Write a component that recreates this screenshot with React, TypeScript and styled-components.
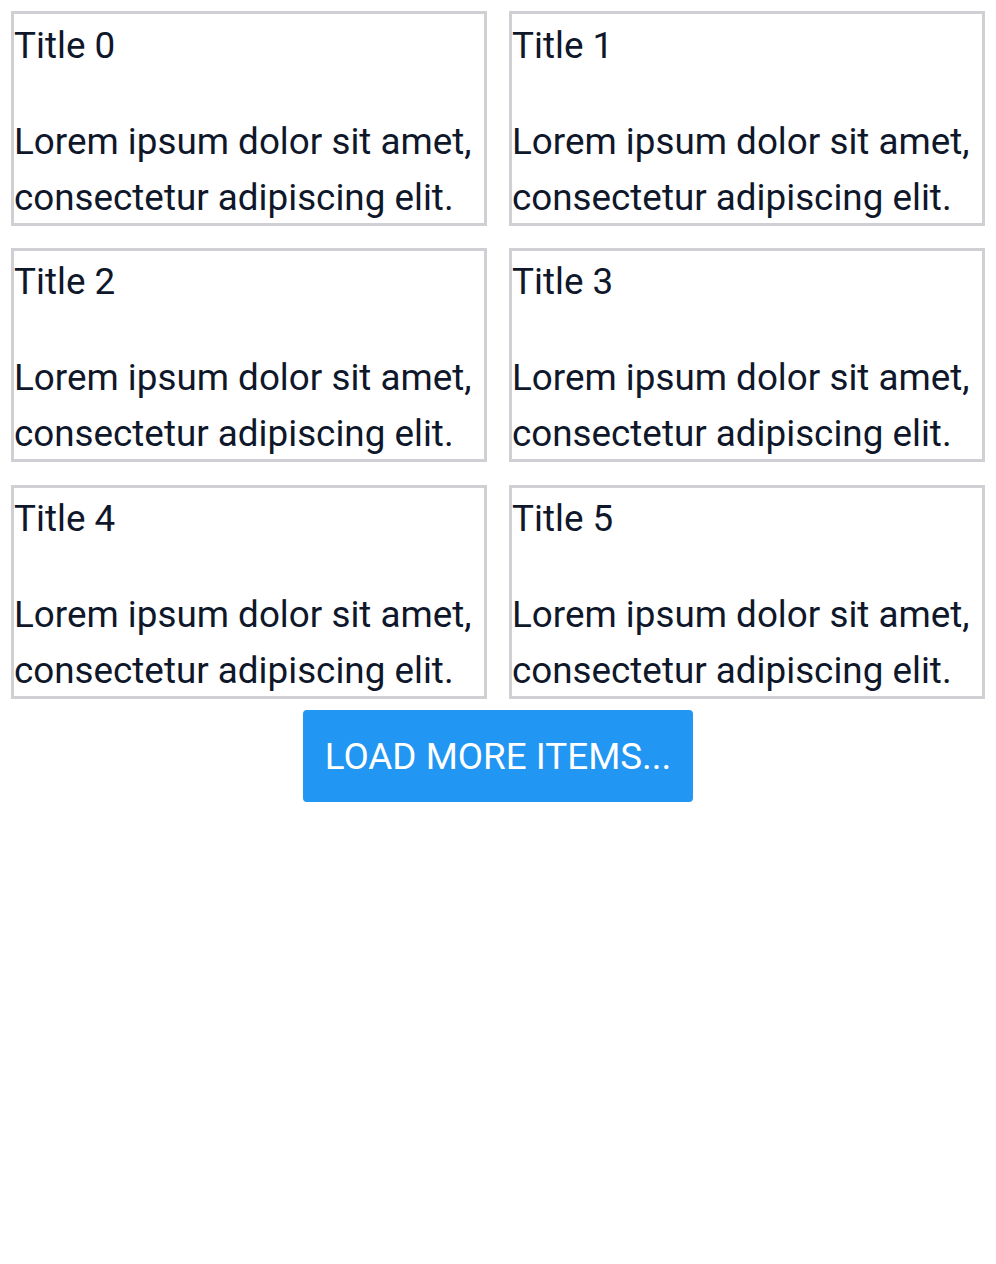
import styled, { createGlobalStyle } from "styled-components";

const GlobalStyle = createGlobalStyle`
  body {
    margin: 8px;
    background: #ffffff;
    font-family: Roboto, "Liberation Sans", sans-serif;
    color: #0f172a;
  }
`;

const Page = styled.div`
  padding: 3px;
  display: flex;
  flex-direction: column;
  align-items: center;
`;

const Grid = styled.div`
  width: 100%;
  display: grid;
  grid-template-columns: 1fr 1fr;
  column-gap: 22px;
  row-gap: 22.2px;
`;

const Card = styled.div`
  border: 3px solid #d0d0d4;
  height: 214.6px;
  box-sizing: border-box;
  overflow: hidden;
`;

const Title = styled.div`
  font-size: 36.8px;
  line-height: 56px;
  padding-top: 3.5px;
`;

const Body = styled.p`
  margin: 40px 0 0;
  font-size: 36.8px;
  line-height: 56px;
`;

const LoadButton = styled.button`
  margin-top: 11px;
  height: 92px;
  padding: 0 22px;
  border: none;
  border-radius: 4px;
  background: #2196f3;
  color: #ffffff;
  font-family: Roboto, "Liberation Sans", sans-serif;
  font-size: 36.8px;
  text-transform: uppercase;
  cursor: pointer;
`;

const items = Array.from({ length: 6 }, (_, i) => ({
  title: `Title ${i}`,
  body: "Lorem ipsum dolor sit amet, consectetur adipiscing elit.",
}));

export default function App() {
  return (
    <>
      <GlobalStyle />
      <Page>
        <Grid>
          {items.map((item) => (
            <Card key={item.title}>
              <Title>{item.title}</Title>
              <Body>{item.body}</Body>
            </Card>
          ))}
        </Grid>
        <LoadButton>Load more items...</LoadButton>
      </Page>
    </>
  );
}
